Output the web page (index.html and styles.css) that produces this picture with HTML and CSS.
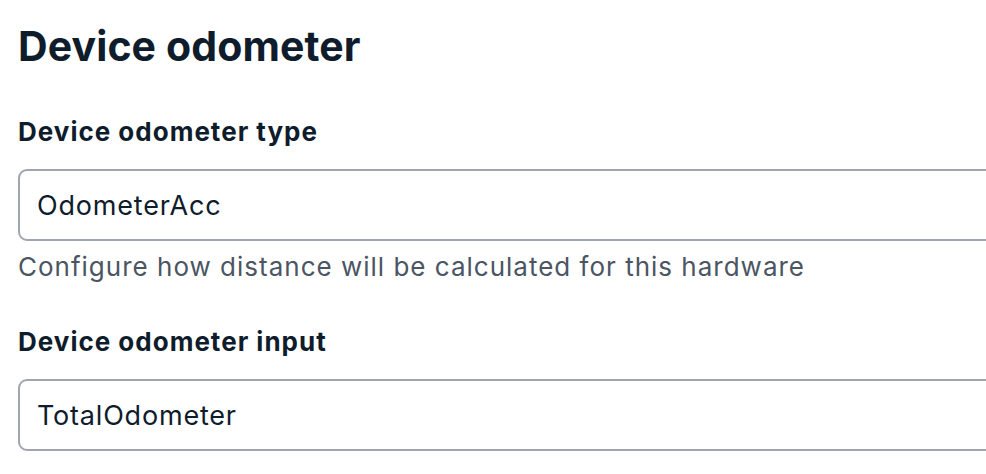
FILE: index.html
```html
<!DOCTYPE html>
<html lang="en">
<head>
    <meta charset="UTF-8">
    <meta name="viewport" content="width=device-width, initial-scale=1.0">
    <title>Device odometer</title>
    <link rel="stylesheet" href="styles.css">
</head>
<body>
    <section class="settings">
        <h1>Device odometer</h1>
        <div class="field">
            <label for="odometer-type">Device odometer type</label>
            <input type="text" id="odometer-type" value="OdometerAcc" readonly>
            <p class="hint">Configure how distance will be calculated for this hardware</p>
        </div>
        <div class="field">
            <label for="odometer-input">Device odometer input</label>
            <input type="text" id="odometer-input" value="TotalOdometer" readonly>
        </div>
    </section>
</body>
</html>
```

FILE: styles.css
```css
/* Global styles */
html, body {
    overflow: hidden;
}

body {
    font-family: Inter, "Noto Sans", sans-serif;
    background-color: #ffffff;
    color: #0f1c2c;
    margin: 0;
    padding: 0;
}

.settings {
    padding: 20px 0 0 18px;
    width: 1010px;
}

h1 {
    font-size: 41px;
    line-height: 52px;
    font-weight: 700;
    letter-spacing: 0.1px;
    margin: 0 0 44px 0;
}

.field {
    display: flex;
    flex-direction: column;
}

.field + .field {
    margin-top: 43px;
}

label {
    font-size: 26px;
    line-height: 32px;
    font-weight: 700;
    letter-spacing: 1px;
    margin-bottom: 21px;
}

input[type="text"] {
    box-sizing: border-box;
    height: 72px;
    width: 100%;
    padding: 0 17px;
    border: 2px solid #a0a6b1;
    border-radius: 9px;
    font-family: inherit;
    font-size: 27px;
    letter-spacing: 0.8px;
    color: #0f1c2c;
    background-color: #ffffff;
    outline: none;
}

.hint {
    font-size: 26px;
    line-height: 32px;
    letter-spacing: 1px;
    color: #4b5563;
    margin: 10px 0 0 0;
}
```
